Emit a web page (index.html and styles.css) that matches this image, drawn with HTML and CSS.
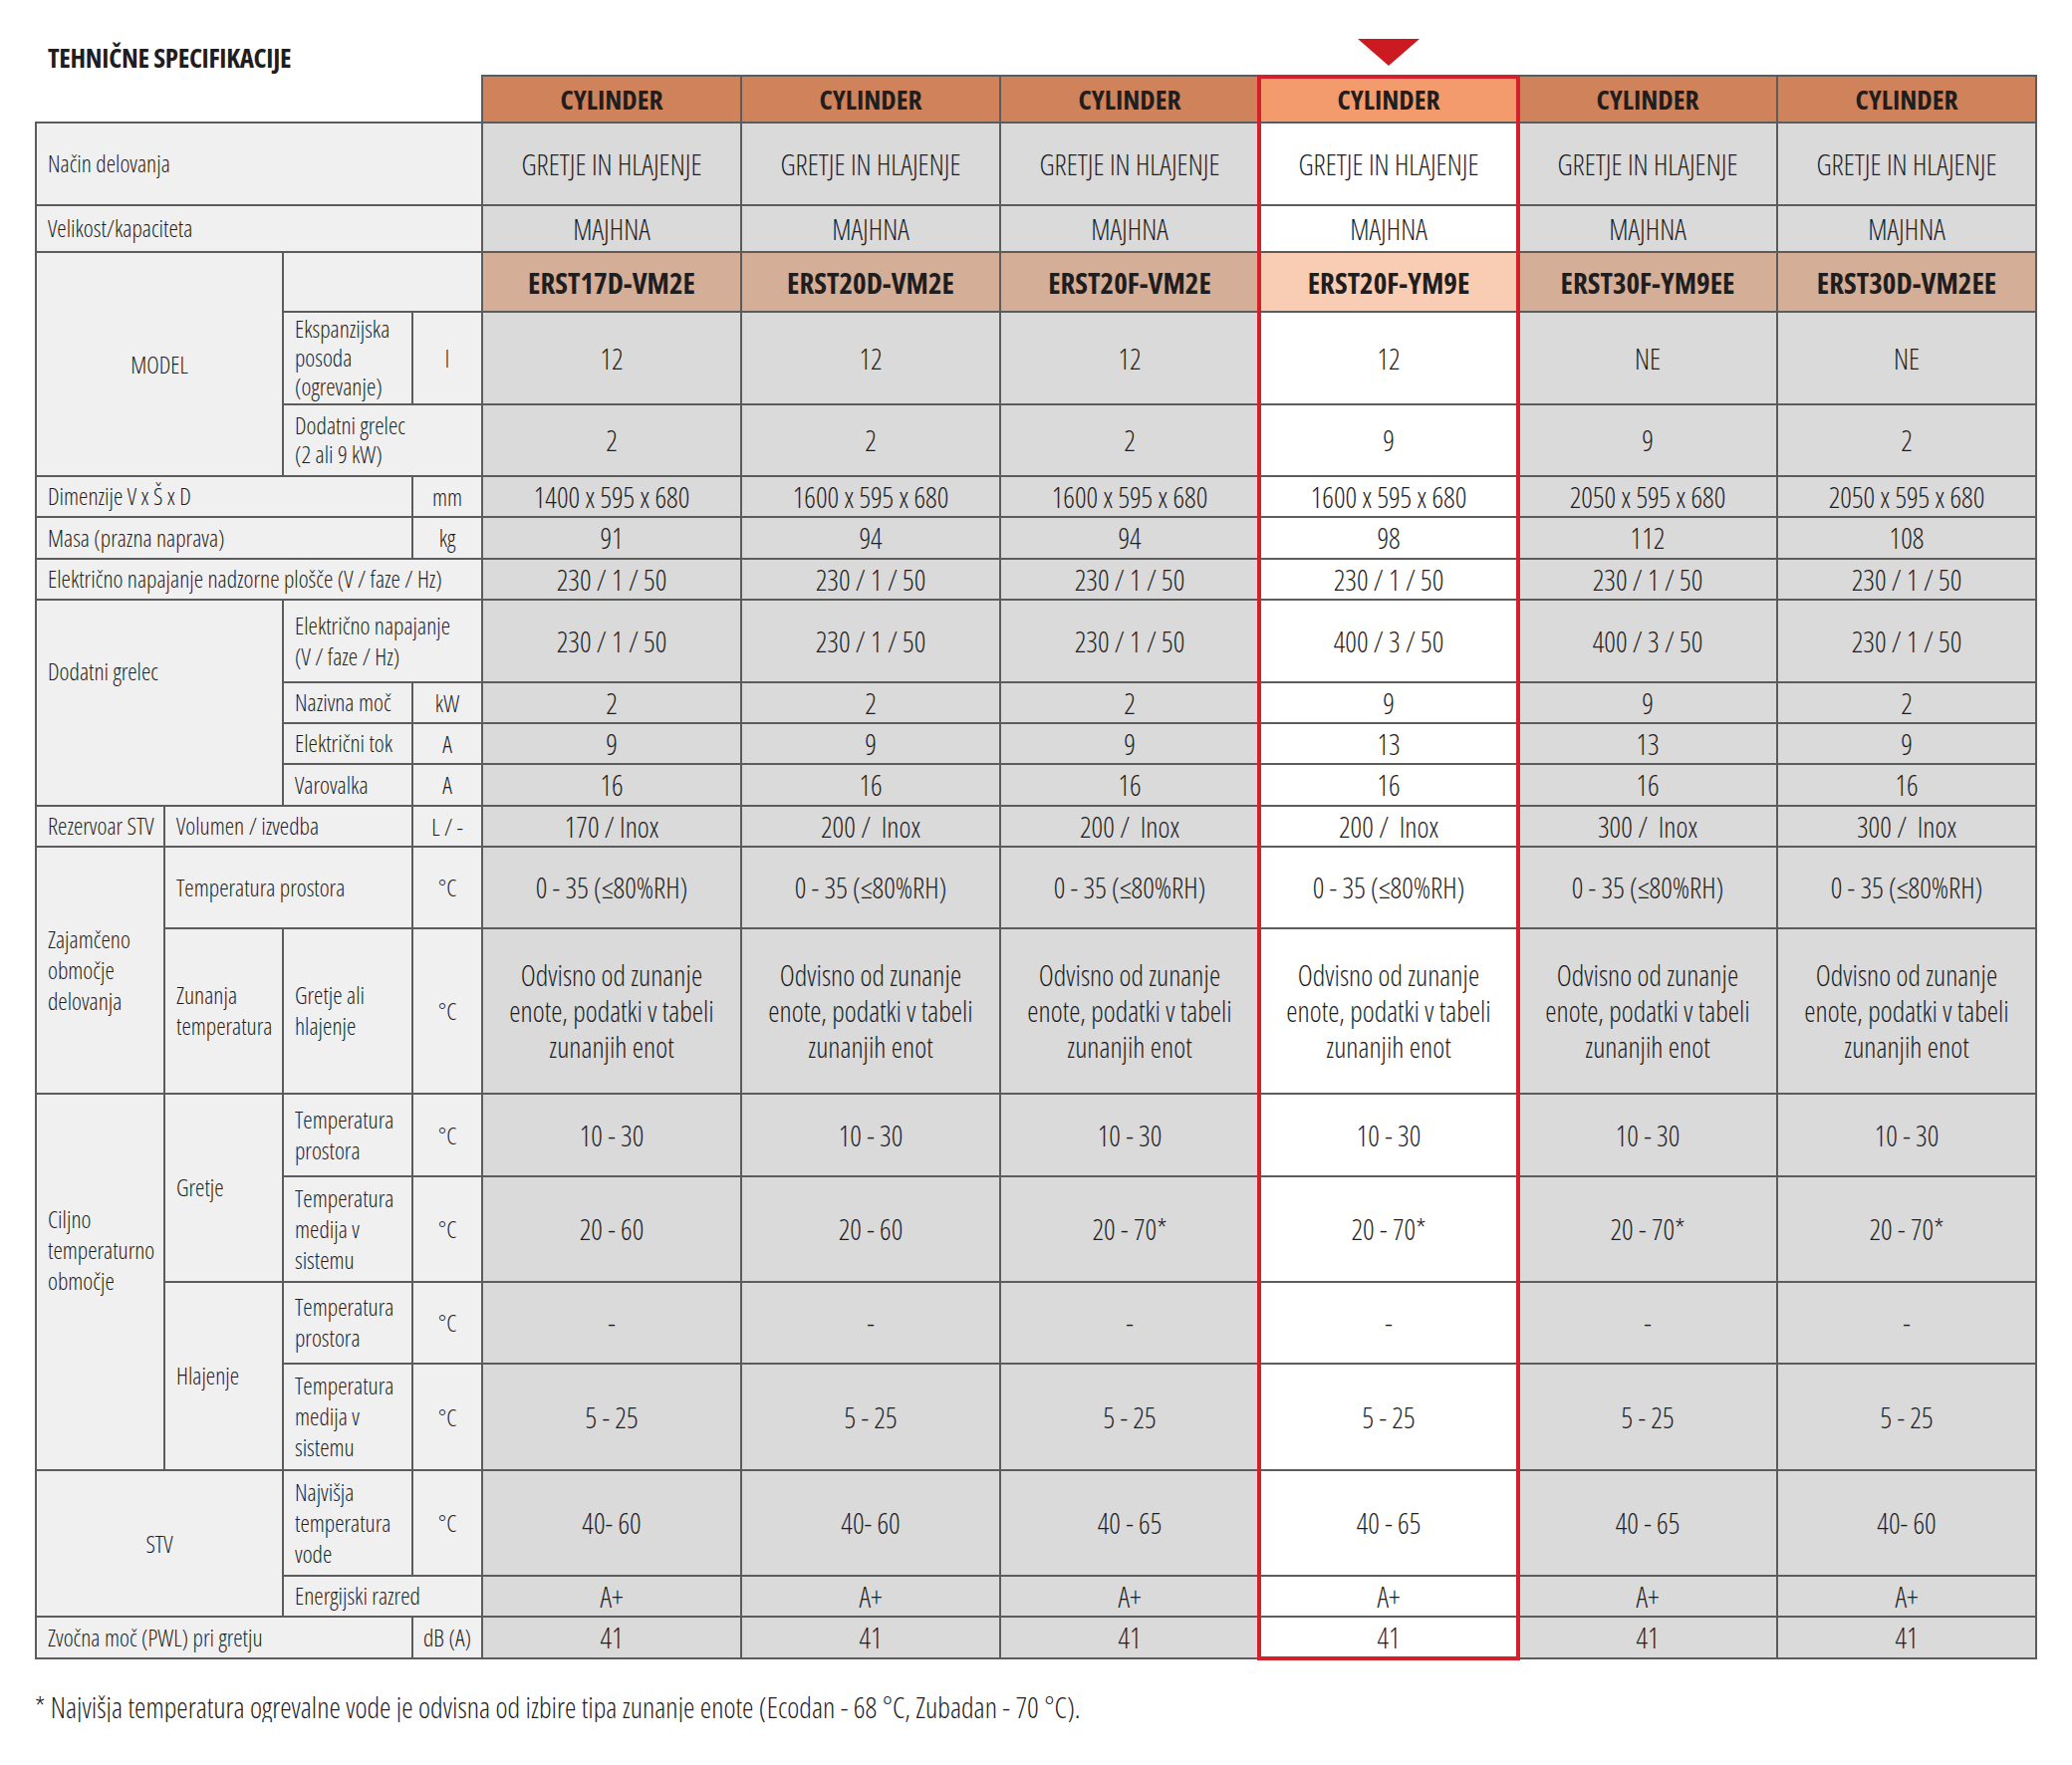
FILE: index.html
```html
<!DOCTYPE html>
<html lang="sl">
<head>
<meta charset="utf-8">
<title>Tehnične specifikacije</title>
<link rel="stylesheet" href="styles.css">
</head>
<body>
<div class="page">
  <div class="top">
    <h1 class="title">TEHNIČNE SPECIFIKACIJE</h1>
    <div class="marks"><span></span><span></span><span></span><span class="arrow"></span><span></span><span></span></div>
  </div>

  <div class="tablewrap">
    <div class="head">
      <div class="hc">CYLINDER</div>
      <div class="hc">CYLINDER</div>
      <div class="hc">CYLINDER</div>
      <div class="hc hl">CYLINDER</div>
      <div class="hc">CYLINDER</div>
      <div class="hc">CYLINDER</div>
    </div>

    <div class="body">
      <!-- Način delovanja -->
      <div class="lb s4">Način delovanja</div>
      <div class="d">GRETJE IN HLAJENJE</div><div class="d">GRETJE IN HLAJENJE</div><div class="d">GRETJE IN HLAJENJE</div><div class="d hl">GRETJE IN HLAJENJE</div><div class="d">GRETJE IN HLAJENJE</div><div class="d">GRETJE IN HLAJENJE</div>

      <!-- Velikost -->
      <div class="lb s4">Velikost/kapaciteta</div>
      <div class="d">MAJHNA</div><div class="d">MAJHNA</div><div class="d">MAJHNA</div><div class="d hl">MAJHNA</div><div class="d">MAJHNA</div><div class="d">MAJHNA</div>

      <!-- MODEL -->
      <div class="lc s2 r3">MODEL</div>
      <div class="lb s2"></div>
      <div class="m">ERST17D-VM2E</div><div class="m">ERST20D-VM2E</div><div class="m">ERST20F-VM2E</div><div class="m hl">ERST20F-YM9E</div><div class="m">ERST30F-YM9EE</div><div class="m">ERST30D-VM2EE</div>

      <div class="lb tight">Ekspanzijska<br>posoda<br>(ogrevanje)</div>
      <div class="u">l</div>
      <div class="d">12</div><div class="d">12</div><div class="d">12</div><div class="d hl">12</div><div class="d">NE</div><div class="d">NE</div>

      <div class="lb s2 tight">Dodatni grelec<br>(2 ali 9 kW)</div>
      <div class="d">2</div><div class="d">2</div><div class="d">2</div><div class="d hl">9</div><div class="d">9</div><div class="d">2</div>

      <!-- Dimenzije -->
      <div class="lb s3">Dimenzije V x Š x D</div>
      <div class="u">mm</div>
      <div class="d">1400 x 595 x 680</div><div class="d">1600 x 595 x 680</div><div class="d">1600 x 595 x 680</div><div class="d hl">1600 x 595 x 680</div><div class="d">2050 x 595 x 680</div><div class="d">2050 x 595 x 680</div>

      <!-- Masa -->
      <div class="lb s3">Masa (prazna naprava)</div>
      <div class="u">kg</div>
      <div class="d">91</div><div class="d">94</div><div class="d">94</div><div class="d hl">98</div><div class="d">112</div><div class="d">108</div>

      <!-- Električno napajanje -->
      <div class="lb s4">Električno napajanje nadzorne plošče (V / faze / Hz)</div>
      <div class="d">230 / 1 / 50</div><div class="d">230 / 1 / 50</div><div class="d">230 / 1 / 50</div><div class="d hl">230 / 1 / 50</div><div class="d">230 / 1 / 50</div><div class="d">230 / 1 / 50</div>

      <!-- Dodatni grelec -->
      <div class="lb s2 r4 raise">Dodatni grelec</div>
      <div class="lb s2">Električno napajanje<br>(V / faze / Hz)</div>
      <div class="d">230 / 1 / 50</div><div class="d">230 / 1 / 50</div><div class="d">230 / 1 / 50</div><div class="d hl">400 / 3 / 50</div><div class="d">400 / 3 / 50</div><div class="d">230 / 1 / 50</div>

      <div class="lb">Nazivna moč</div>
      <div class="u">kW</div>
      <div class="d">2</div><div class="d">2</div><div class="d">2</div><div class="d hl">9</div><div class="d">9</div><div class="d">2</div>

      <div class="lb">Električni tok</div>
      <div class="u">A</div>
      <div class="d">9</div><div class="d">9</div><div class="d">9</div><div class="d hl">13</div><div class="d">13</div><div class="d">9</div>

      <div class="lb">Varovalka</div>
      <div class="u">A</div>
      <div class="d">16</div><div class="d">16</div><div class="d">16</div><div class="d hl">16</div><div class="d">16</div><div class="d">16</div>

      <!-- Rezervoar -->
      <div class="lb">Rezervoar STV</div>
      <div class="lb s2">Volumen / izvedba</div>
      <div class="u">L / -</div>
      <div class="d">170 / Inox</div><div class="d">200 /&nbsp; Inox</div><div class="d">200 /&nbsp; Inox</div><div class="d hl">200 /&nbsp; Inox</div><div class="d">300 /&nbsp; Inox</div><div class="d">300 /&nbsp; Inox</div>

      <!-- Zajamčeno -->
      <div class="lb r2">Zajamčeno<br>območje<br>delovanja</div>
      <div class="lb s2">Temperatura prostora</div>
      <div class="u">°C</div>
      <div class="d">0 - 35 (≤80%RH)</div><div class="d">0 - 35 (≤80%RH)</div><div class="d">0 - 35 (≤80%RH)</div><div class="d hl">0 - 35 (≤80%RH)</div><div class="d">0 - 35 (≤80%RH)</div><div class="d">0 - 35 (≤80%RH)</div>

      <div class="lb">Zunanja<br>temperatura</div>
      <div class="lb">Gretje ali<br>hlajenje</div>
      <div class="u">°C</div>
      <div class="d">Odvisno od zunanje<br>enote, podatki v tabeli<br>zunanjih enot</div><div class="d">Odvisno od zunanje<br>enote, podatki v tabeli<br>zunanjih enot</div><div class="d">Odvisno od zunanje<br>enote, podatki v tabeli<br>zunanjih enot</div><div class="d hl">Odvisno od zunanje<br>enote, podatki v tabeli<br>zunanjih enot</div><div class="d">Odvisno od zunanje<br>enote, podatki v tabeli<br>zunanjih enot</div><div class="d">Odvisno od zunanje<br>enote, podatki v tabeli<br>zunanjih enot</div>

      <!-- Ciljno -->
      <div class="lb r4 raise">Ciljno<br>temperaturno<br>območje</div>
      <div class="lb r2">Gretje</div>
      <div class="lb">Temperatura<br>prostora</div>
      <div class="u">°C</div>
      <div class="d">10 - 30</div><div class="d">10 - 30</div><div class="d">10 - 30</div><div class="d hl">10 - 30</div><div class="d">10 - 30</div><div class="d">10 - 30</div>

      <div class="lb">Temperatura<br>medija v<br>sistemu</div>
      <div class="u">°C</div>
      <div class="d">20 - 60</div><div class="d">20 - 60</div><div class="d">20 - 70*</div><div class="d hl">20 - 70*</div><div class="d">20 - 70*</div><div class="d">20 - 70*</div>

      <div class="lb r2">Hlajenje</div>
      <div class="lb">Temperatura<br>prostora</div>
      <div class="u">°C</div>
      <div class="d">-</div><div class="d">-</div><div class="d">-</div><div class="d hl">-</div><div class="d">-</div><div class="d">-</div>

      <div class="lb">Temperatura<br>medija v<br>sistemu</div>
      <div class="u">°C</div>
      <div class="d">5 - 25</div><div class="d">5 - 25</div><div class="d">5 - 25</div><div class="d hl">5 - 25</div><div class="d">5 - 25</div><div class="d">5 - 25</div>

      <!-- STV -->
      <div class="lc s2 r2">STV</div>
      <div class="lb">Najvišja<br>temperatura<br>vode</div>
      <div class="u">°C</div>
      <div class="d">40- 60</div><div class="d">40- 60</div><div class="d">40 - 65</div><div class="d hl">40 - 65</div><div class="d">40 - 65</div><div class="d">40- 60</div>

      <div class="lb s2">Energijski razred</div>
      <div class="d">A+</div><div class="d">A+</div><div class="d">A+</div><div class="d hl">A+</div><div class="d">A+</div><div class="d">A+</div>

      <!-- Zvočna moč -->
      <div class="lb s3">Zvočna moč (PWL) pri gretju</div>
      <div class="u">dB (A)</div>
      <div class="d">41</div><div class="d">41</div><div class="d">41</div><div class="d hl">41</div><div class="d">41</div><div class="d">41</div>
    </div>

    <div class="frame"></div>
  </div>

  <p class="note">* Najvišja temperatura ogrevalne vode je odvisna od izbire tipa zunanje enote (Ecodan - 68 °C, Zubadan - 70 °C).</p>
</div>
</body>
</html>
```
FILE: styles.css
```css
html, body {
  margin: 0;
  padding: 0;
  background: #ffffff;
}

.page {
  padding-left: 35px;
  width: 2045px;
  font-family: "Open Sans", "Liberation Sans", sans-serif;
  font-stretch: 75%;
  color: #1f1d1e;
}

/* ---------- top: title + marker ---------- */
.top {
  display: flex;
  height: 75px;
}

.title {
  box-sizing: border-box;
  width: 448px;
  margin: 0;
  padding: 44px 0 0 13px;
  font-size: 27px;
  line-height: 27px;
  font-weight: 700;
  letter-spacing: -0.3px;
  white-space: nowrap;
}

.marks {
  display: grid;
  grid-template-columns: repeat(6, 258px);
  column-gap: 2px;
  padding: 0 2px;
  align-items: start;
}

.arrow {
  justify-self: center;
  margin-top: 39px;
  width: 0;
  height: 0;
  border-left: 31px solid transparent;
  border-right: 31px solid transparent;
  border-top: 27px solid #cc1b20;
}

/* ---------- table ---------- */
.tablewrap {
  position: relative;
  width: 2010px;
}

.head {
  display: grid;
  grid-template-columns: repeat(6, 258px);
  grid-template-rows: 45px;
  gap: 2px;
  margin-left: 448px;
  padding: 2px 2px 0 2px;
  background: #5c5c5c;
  width: max-content;
}

.hc {
  display: flex;
  align-items: center;
  justify-content: center;
  background: #d0825a;
  font-size: 27.5px;
  font-weight: 700;
  color: #1f1d1e;
}

.hc.hl {
  background: #f39b6c;
}

.body {
  display: grid;
  grid-template-columns: 127px 117px 128px 68px repeat(6, 258px);
  grid-template-rows: 81px 45px 58px 91px 70px 39px 40px 39px 81px 39px 39px 40px 39px 80px 164px 81px 104px 80px 105px 104px 39px 40px;
  gap: 2px;
  padding: 2px;
  background: #5c5c5c;
  width: max-content;
}

.body > div {
  display: flex;
  align-items: center;
  min-width: 0;
}

/* label cells */
.lb {
  box-sizing: border-box;
  background: #f0f0f0;
  padding-left: 11px;
  font-size: 23.7px;
  font-weight: 300;
  line-height: 31px;
  white-space: nowrap;
}

.lb.tight {
  line-height: 29px;
}

.lb.raise {
  padding-bottom: 63px;
}

.lc {
  background: #f0f0f0;
  justify-content: center;
  font-size: 23.7px;
  font-weight: 300;
}

.u {
  background: #f0f0f0;
  justify-content: center;
  font-size: 23.7px;
  font-weight: 300;
  white-space: nowrap;
}

/* data cells */
.d {
  justify-content: center;
  text-align: center;
  background: #dadada;
  font-size: 28.5px;
  font-weight: 300;
  line-height: 36px;
  white-space: nowrap;
}

.d.hl {
  background: #ffffff;
}

/* model name cells */
.m {
  justify-content: center;
  background: #d5ae97;
  font-size: 29px;
  font-weight: 700;
  white-space: nowrap;
}

.m.hl {
  background: #f9cdb3;
}

/* spans */
.s2 { grid-column: span 2; }
.s3 { grid-column: span 3; }
.s4 { grid-column: span 4; }
.r2 { grid-row: span 2; }
.r3 { grid-row: span 3; }
.r4 { grid-row: span 4; }

/* highlight frame around selected column */
.frame {
  position: absolute;
  left: 1227px;
  top: 0;
  width: 264px;
  height: 1592px;
  box-sizing: border-box;
  border: 4px solid #d4202a;
  pointer-events: none;
}

/* footnote */
.note {
  margin: 32px 0 0 0;
  font-size: 28.8px;
  line-height: 31px;
  font-weight: 300;
  white-space: nowrap;
}
```
